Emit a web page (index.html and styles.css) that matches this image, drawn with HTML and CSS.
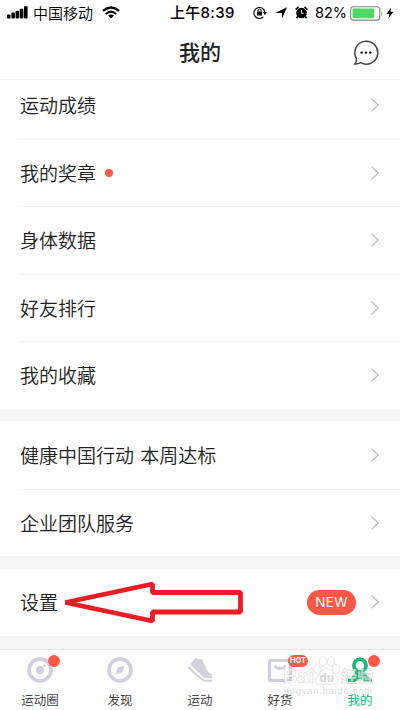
FILE: index.html
```html
<!doctype html>
<html lang="zh-CN">
<head>
<meta charset="utf-8">
<title>我的</title>
<link rel="stylesheet" href="styles.css">
</head>
<body>
<div class="phone">
	<div class="status">
		<svg class="signal" width="21" height="13" viewBox="0 0 21 13">
			<rect x="0" y="8.5" width="3.6" height="4" rx="1"/>
			<rect x="4.4" y="6.5" width="3.6" height="6" rx="1"/>
			<rect x="8.6" y="4.8" width="3.6" height="7.7" rx="1"/>
			<rect x="12.8" y="2.7" width="3.6" height="9.8" rx="1"/>
			<rect x="17" y="0.3" width="3.6" height="12.2" rx="1"/>
		</svg>
		<span class="carrier">中国移动</span>
		<svg class="wifi" width="18" height="13" viewBox="0 0 18 13">
			<path d="M1 4.8 Q9 -2 17 4.8" fill="none" stroke="#000" stroke-width="2.4"/>
			<path d="M3.9 8 Q9 3.4 14.1 8" fill="none" stroke="#000" stroke-width="2.2"/>
			<path d="M6.1 9.6 Q9 7.2 11.9 9.6 L9 12.6 Z"/>
		</svg>
		<span class="time">上午8:39</span>
		<svg class="lock" width="15" height="13" viewBox="0 0 15 13">
			<path d="M10.3 10.9 A5.5 5.5 0 1 1 11.9 6.3" fill="none" stroke="#000" stroke-width="1.1"/>
			<path d="M9.8 6 H14 L11.9 8.9 Z"/>
			<rect x="4" y="5.7" width="5" height="3.8"/>
			<path d="M5 6 V4.7 A1.5 1.5 0 0 1 8 4.7 V6" fill="none" stroke="#000"/>
		</svg>
		<svg class="locate" width="12" height="12" viewBox="0 0 12 12"><path d="M11.9 0.2 L7 11.6 V5.9 H0.2 Z"/></svg>
		<svg class="alarm" width="13" height="13" viewBox="0 0 13 13">
			<circle cx="6.5" cy="7" r="5.3"/>
			<path d="M0.7 3.6 L3.6 0.9 M12.3 3.6 L9.4 0.9 M2.7 10.5 L1.5 12.3 M10.3 10.5 L11.5 12.3" stroke="#000" stroke-width="1.6"/>
			<path d="M6.5 4.2 V7.3 H8.6" fill="none" stroke="#fff" stroke-width="0.9"/>
		</svg>
		<span class="percent">82%</span>
		<svg class="battery" width="34" height="15" viewBox="0 0 34 15">
			<rect x="0.7" y="0.7" width="29" height="13.4" rx="2.6" fill="#fff" stroke="#858585" stroke-width="1.1"/>
			<rect x="2.6" y="2.5" width="21.6" height="9.8" rx="1" fill="#4cd964"/>
			<path d="M31.4 5 Q33.4 7.4 31.4 9.8 Z" fill="#858585"/>
		</svg>
		<svg class="bolt" width="8" height="12" viewBox="0 0 8 12"><path d="M5.2 0.4 L0.4 6.9 H3.4 L2.4 11.6 L7.5 4.7 H4.4 Z"/></svg>
	</div>

	<div class="header">
		<h1 class="title">我的</h1>
		<svg class="chat" width="26" height="26" viewBox="0 0 26 26">
			<path d="M3.3 18.4 A11.5 11.5 0 1 1 7.6 22.7 Q5.3 24.2 2 24 Q3.9 21.5 3.3 18.4 Z" fill="none" stroke="#444" stroke-width="1.5"/>
			<circle cx="8.7" cy="12.6" r="1.2"/><circle cx="13" cy="12.6" r="1.2"/><circle cx="17.3" cy="12.6" r="1.2"/>
		</svg>
	</div>

	<div class="content">
		<div class="group">
			<div class="row"><span>运动成绩</span><svg class="arrow" viewBox="0 0 8 14"><path d="M0.6 0.6 L7.2 7 L0.6 13.4"/></svg></div>
			<div class="row"><span>我的奖章</span><i class="dot"></i><svg class="arrow" viewBox="0 0 8 14"><path d="M0.6 0.6 L7.2 7 L0.6 13.4"/></svg></div>
			<div class="row"><span>身体数据</span><svg class="arrow" viewBox="0 0 8 14"><path d="M0.6 0.6 L7.2 7 L0.6 13.4"/></svg></div>
			<div class="row"><span>好友排行</span><svg class="arrow" viewBox="0 0 8 14"><path d="M0.6 0.6 L7.2 7 L0.6 13.4"/></svg></div>
			<div class="row"><span>我的收藏</span><svg class="arrow" viewBox="0 0 8 14"><path d="M0.6 0.6 L7.2 7 L0.6 13.4"/></svg></div>
		</div>
		<div class="group">
			<div class="row"><span>健康中国行动 本周达标</span><svg class="arrow" viewBox="0 0 8 14"><path d="M0.6 0.6 L7.2 7 L0.6 13.4"/></svg></div>
			<div class="row"><span>企业团队服务</span><svg class="arrow" viewBox="0 0 8 14"><path d="M0.6 0.6 L7.2 7 L0.6 13.4"/></svg></div>
		</div>
		<div class="group">
			<div class="row"><span>设置</span><b class="new">NEW</b><svg class="arrow" viewBox="0 0 8 14"><path d="M0.6 0.6 L7.2 7 L0.6 13.4"/></svg>
				<svg class="pointer" width="182" height="46" viewBox="0 0 182 46"><path d="M3.5 22.5 L90.5 4 V12.5 H178.5 V32 H90.5 V41 Z"/></svg>
			</div>
		</div>
	</div>

	<div class="tabs">
		<div class="tab">
			<svg width="28" height="28" viewBox="0 0 28 28">
				<circle cx="14" cy="14" r="11" fill="none" stroke="#d0d0dc" stroke-width="3.6"/>
				<circle cx="14" cy="14" r="4" fill="#d0d0dc"/><circle cx="18.6" cy="9.6" r="1.2" fill="#d0d0dc"/>
			</svg>
			<span>运动圈</span><i class="badge"></i>
		</div>
		<div class="tab">
			<svg width="28" height="28" viewBox="0 0 28 28">
				<circle cx="14" cy="14" r="11" fill="none" stroke="#d0d0dc" stroke-width="3.6"/>
				<path d="M18.3 9.7 L16.4 16.4 L9.7 18.3 L11.6 11.6 Z" fill="#d0d0dc"/>
			</svg>
			<span>发现</span>
		</div>
		<div class="tab">
			<svg width="28" height="28" viewBox="0 0 28 28" fill="#d0d2dc">
				<path d="M4.2 8.6 L9.1 2.3 Q9.8 1.5 10.7 2.3 Q12.6 4 14.5 3 Q15.5 2.6 16.2 3.7 L21.3 14.4 Q22.4 16.6 25.3 18 Q26.2 18.6 26 20.2 V22.2 H20.2 Q18.5 22.2 17.2 21 Z"/>
				<path d="M2.2 11 Q11.4 20.2 17.4 24.2 Q18.4 24.8 20 24.8 H26" fill="none" stroke="#d0d2dc" stroke-width="2"/>
			</svg>
			<span>运动</span>
		</div>
		<div class="tab">
			<svg width="28" height="28" viewBox="0 0 28 28" fill="none" stroke="#d0d0dc">
				<rect x="3.5" y="4.5" width="21" height="20" rx="1" stroke-width="3.2"/>
				<path d="M8.5 10 Q14 15.5 19.5 10" stroke-width="2.6"/>
			</svg>
			<span>好货</span><b class="badge hot">HOT</b>
		</div>
		<div class="tab active">
			<svg width="28" height="28" viewBox="0 0 28 28">
				<path d="M10 15 H18 Q20 20 26 23 V26 H19 L14 22.5 L9 26 H2 V23 Q8 20 10 15 Z" fill="#13b877"/>
				<circle cx="14" cy="9.4" r="6.1" fill="#fff" stroke="#13b877" stroke-width="3.6"/>
			</svg>
			<span>我的</span><i class="badge"></i>
		</div>
		<svg class="watermark" width="104" height="60" viewBox="0 0 104 60">
			<g class="logo">
				<text x="7" y="35" textLength="31" lengthAdjust="spacingAndGlyphs">Bai</text>
				<text class="cn" x="65" y="34">经验</text>
				<ellipse cx="41.5" cy="21" rx="3.6" ry="4.6"/>
				<ellipse cx="47" cy="13.5" rx="3.6" ry="5"/>
				<ellipse cx="55" cy="13.5" rx="3.6" ry="5"/>
				<ellipse cx="60" cy="21" rx="3.6" ry="4.6"/>
				<path d="M50.5 20 Q55 20 58 26 Q64 31 61 35 Q58 38 50 36 Q42 38 40 35 Q37 31 44 26 Q46 20 50.5 20 Z"/>
			</g>
			<text class="du" x="43.5" y="33.5">du</text>
			<text class="url" x="8" y="45.5" textLength="88">jingyan.baidu.com</text>
		</svg>
	</div>
</div>
</body>
</html>
```
FILE: styles.css
```css
* {margin: 0; padding: 0; box-sizing: border-box;}
body {
	background: #fff;
	color: #222;
	font-family: "Noto Sans CJK SC", sans-serif;
}
.phone {
	width: 400px;
	height: 710px;
	overflow: hidden;
	background: #f7f7f7;
	display: flex;
	flex-direction: column;
}
.phone svg {
	flex: none;
}
.status {
	height: 26px;
	flex: none;
	background: #fff;
	color: #000;
	display: flex;
	align-items: center;
	padding-left: 7px;
	font-size: 15px;
	line-height: 26px;
	z-index: 1;
}
.signal {
	margin-top: -1px;
}
.carrier {
	width: 60px;
	margin-left: 5px;
	font-weight: 350;
}
.wifi {
	margin-left: 9px;
	margin-top: -1px;
}
.time {
	width: 66px;
	margin-left: 50px;
	font-family: Inter, "Noto Sans CJK SC", sans-serif;
	font-weight: 500;
	letter-spacing: 0.3px;
	white-space: nowrap;
}
.lock {
	margin-left: 17px;
	margin-top: -1px;
}
.locate {
	margin-left: 7px;
	margin-top: -1px;
}
.alarm {
	margin-left: 8px;
	margin-top: -2px;
}
.percent {
	width: 31px;
	margin-left: 7px;
	font-family: Inter, sans-serif;
	font-size: 14.5px;
}
.battery {
	margin-left: 4px;
}
.bolt {
	margin-left: 2px;
}
.header {
	height: 54px;
	flex: none;
	background: #fff;
	border-bottom: 1px solid #f3f3f3;
	display: grid;
	grid-template-columns: 60px 1fr 60px;
	align-items: center;
	z-index: 1;
}
.title {
	grid-column: 2;
	font-size: 21px;
	font-weight: 500;
	line-height: 48px;
	padding-bottom: 4px;
	text-align: center;
}
.chat {
	margin-left: 13px;
}
/* список прокручен, первая строка уходит под шапку */
.content {
	margin-top: -9px;
	height: 578px;
	flex: none;
}
.group {
	background: #fff;
	margin-bottom: 12.5px;
}
.row {
	position: relative;
	height: 67.5px;
	margin-left: 20px;
	padding-right: 21px;
	display: flex;
	align-items: center;
	font-size: 19px;
	font-weight: 350;
	word-spacing: 2px;
}
.row span {
	margin-top: -1px;
}
.row + .row {
	border-top: 1px solid #f3f3f3;
}
.arrow {
	width: 8px;
	height: 14px;
	margin-left: auto;
	fill: none;
	stroke: #b5b5b5;
	stroke-width: 1.1;
}
.dot {
	width: 8px;
	height: 8px;
	margin-left: 9px;
	border-radius: 50%;
	background: #fc5848;
}
.new {
	width: 49px;
	height: 25px;
	margin-left: auto;
	margin-right: 15px;
	border-radius: 13px;
	background: #fc5848;
	color: #fff;
	font: 13.5px/25px Inter, sans-serif;
	letter-spacing: 0.3px;
	text-align: center;
}
.new + .arrow {
	margin-left: 0;
}
.pointer {
	position: absolute;
	left: 42px;
	top: 11px;
	fill: none;
	stroke: #ed1c24;
	stroke-width: 4.8;
	stroke-linejoin: bevel;
}
.tabs {
	position: relative;
	height: 61px;
	flex: none;
	background: #fff;
	border-top: 1px solid #e6e6e6;
	display: flex;
}
.tab {
	position: relative;
	width: 80px;
	padding-top: 6px;
	display: flex;
	flex-direction: column;
	align-items: center;
	color: #444;
	font-size: 12.5px;
	line-height: 18px;
}
.tab span {
	margin-top: 7px;
}
.tab.active {
	color: #13b877;
}
.badge {
	position: absolute;
	left: 48px;
	top: 5px;
	width: 12px;
	height: 12px;
	border-radius: 6px;
	background: #fc5848;
}
.hot {
	width: 20px;
	color: #fff;
	font: bold 7.5px/12px Inter, sans-serif;
	text-align: center;
}
.watermark {
	position: absolute;
	left: 276px;
	top: -2px;
	font-family: "Liberation Sans", "Noto Sans CJK SC", sans-serif;
}
.logo {
	fill: #fff;
	fill-opacity: 0.65;
	stroke: #c8c8c8;
	stroke-opacity: 0.7;
	stroke-width: 0.6;
	font-size: 20px;
	font-weight: bold;
}
.cn {
	font-size: 16px;
}
.du {
	fill: #d4d4d4;
	font-size: 12px;
	font-weight: bold;
}
.url {
	fill: #d4d4d4;
	fill-opacity: 0.8;
	font-size: 9px;
}
```
